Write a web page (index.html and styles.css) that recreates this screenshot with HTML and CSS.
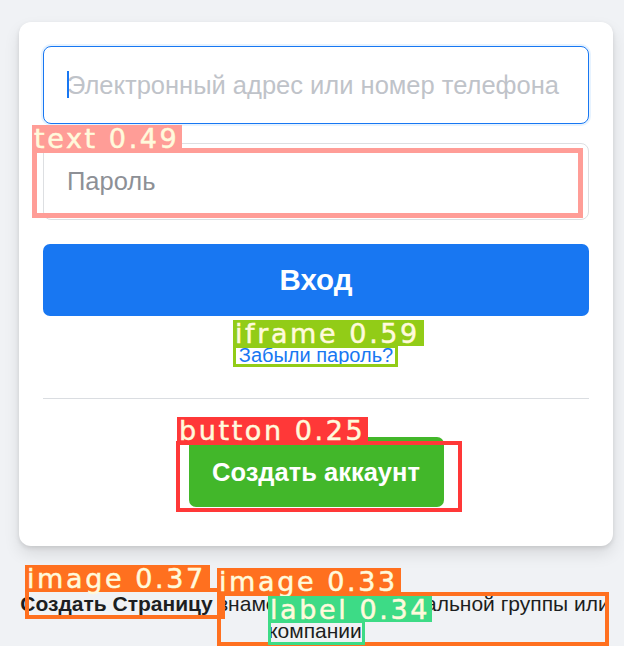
FILE: index.html
```html
<!DOCTYPE html>
<html lang="ru">
<head>
<meta charset="utf-8">
<title>Вход</title>
<link rel="stylesheet" href="styles.css">
</head>
<body>
<div class="page">
  <div class="card">
    <form class="login">
      <div class="field">
        <input class="input input-focus" type="text" placeholder="Электронный адрес или номер телефона">
        <span class="caret"></span>
      </div>
      <input class="input input-pass" type="password" placeholder="Пароль">
      <button type="button" class="btn-login">Вход</button>
      <div class="forgot"><a href="#">Забыли пароль?</a></div>
      <div class="divider"></div>
      <div class="create-wrap"><button type="button" class="btn-create">Создать аккаунт</button></div>
    </form>
  </div>
  <p class="page-note"><a href="#" class="page-link">Создать Страницу</a> знаменитости, музыкальной группы или компании</p>
</div>

<div class="det det-salmon box-text"></div>
<div class="tag tag-salmon tag-text">text 0.49</div>
<div class="det det-lime box-iframe"></div>
<div class="tag tag-lime tag-iframe">iframe 0.59</div>
<div class="det det-red box-button"></div>
<div class="tag tag-red tag-button">button 0.25</div>
<div class="det det-orange box-img1"></div>
<div class="tag tag-orange tag-img1">image 0.37</div>
<div class="det det-orange box-img2"></div>
<div class="tag tag-orange tag-img2">image 0.33</div>
<div class="det det-green box-label"></div>
<div class="tag tag-green tag-label">label 0.34</div>
</body>
</html>
```
FILE: styles.css
```css
html, body {
  margin: 0;
  padding: 0;
}
body {
  background: #f0f2f5;
  font-family: "Liberation Sans", Arial, sans-serif;
  color: #1c1e21;
  position: relative;
  width: 624px;
  height: 646px;
  overflow: hidden;
}
.page {
  padding: 22px 11px 0 19px;
}
.card {
  width: 594px;
  box-sizing: border-box;
  background: #fff;
  border-radius: 12px;
  box-shadow: 0 2px 4px rgba(0, 0, 0, .1), 0 8px 16px rgba(0, 0, 0, .1);
  padding: 24px 24px 39px;
}
.login {
  display: flex;
  flex-direction: column;
  margin: 0;
}
.field {
  position: relative;
  display: flex;
}
.input {
  box-sizing: border-box;
  width: 546px;
  border: 1px solid #dddfe2;
  border-radius: 8px;
  padding: 0 23px;
  font-family: "Liberation Sans", Arial, sans-serif;
  font-size: 25.5px;
  color: #1c1e21;
  outline: none;
  background: #fff;
}
.input-focus {
  height: 78px;
  border-color: #1877f2;
  box-shadow: 0 0 0 2px #e7f3ff;
}
.input-focus::placeholder {
  color: #bfc3c9;
}
.input-pass {
  height: 77px;
  margin-top: 19px;
}
.input-pass::placeholder {
  color: #8d9096;
}
.caret {
  position: absolute;
  left: 24px;
  top: 25px;
  width: 2px;
  height: 27px;
  background: #1877f2;
}
.btn-login {
  margin-top: 24px;
  height: 72px;
  border: none;
  border-radius: 7px;
  background: #1877f2;
  color: #fff;
  font-family: "Liberation Sans", Arial, sans-serif;
  font-weight: bold;
  font-size: 29.5px;
  padding: 0;
}
.forgot {
  margin-top: 29px;
  text-align: center;
  font-size: 20px;
  line-height: 21px;
}
.forgot a {
  color: #1877f2;
  text-decoration: none;
}
.divider {
  margin-top: 32px;
  height: 1px;
  background: #dadde1;
}
.create-wrap {
  display: flex;
  justify-content: center;
  margin-top: 38px;
}
.btn-create {
  width: 255px;
  height: 70px;
  border: none;
  border-radius: 7px;
  background: #42b72a;
  color: #fff;
  font-family: "Liberation Sans", Arial, sans-serif;
  font-weight: bold;
  font-size: 25.5px;
  padding: 0;
}
.page-note {
  width: 594px;
  margin: 44px 0 0 -1px;
  text-align: center;
  font-size: 21px;
  line-height: 27px;
  color: #1c1e21;
}
.page-link {
  font-weight: bold;
  color: #1c1e21;
  text-decoration: none;
}

/* detection overlays */
.det {
  position: absolute;
  box-sizing: border-box;
  border-style: solid;
  border-width: 4px;
}
.tag {
  position: absolute;
  box-sizing: border-box;
  height: 24px;
  padding-left: 2px;
  font-family: "DejaVu Sans", sans-serif;
  font-size: 27px;
  line-height: 27px;
  letter-spacing: 2.6px;
  color: #fffadc;
  -webkit-text-stroke: 0.5px #fffadc;
  white-space: nowrap;
  overflow: visible;
}
.det-salmon { border-color: #ff9d97; }
.tag-salmon { background: #ff9d97; }
.det-lime { border-color: #92cc17; }
.tag-lime { background: #92cc17; }
.det-red { border-color: #ff3838; }
.tag-red { background: #ff3838; }
.det-orange { border-color: #ff701f; }
.tag-orange { background: #ff701f; }
.det-green { border-color: #3ddb86; }
.tag-green { background: #3ddb86; }

.box-text { left: 32px; top: 148px; width: 551px; height: 70px; border-width: 5px; }
.tag-text { left: 32px; top: 125px; width: 150px; height: 25px; }
.box-iframe { left: 233px; top: 345px; width: 165px; height: 22px; border-width: 3px; }
.tag-iframe { left: 233px; top: 320px; width: 191px; height: 26px; }
.box-button { left: 176px; top: 441px; width: 286px; height: 71px; }
.tag-button { left: 177px; top: 417px; width: 191px; height: 26px; }
.box-img1 { left: 25px; top: 588px; width: 200px; height: 31px; }
.tag-img1 { left: 25px; top: 565px; width: 185px; height: 25px; }
.box-img2 { left: 217px; top: 592px; width: 392px; height: 54px; }
.tag-img2 { left: 217px; top: 568px; width: 184px; height: 26px; }
.box-label { left: 268px; top: 620px; width: 97px; height: 25px; border-width: 3px; }
.tag-label { left: 268px; top: 596px; width: 164px; height: 26px; }
```
